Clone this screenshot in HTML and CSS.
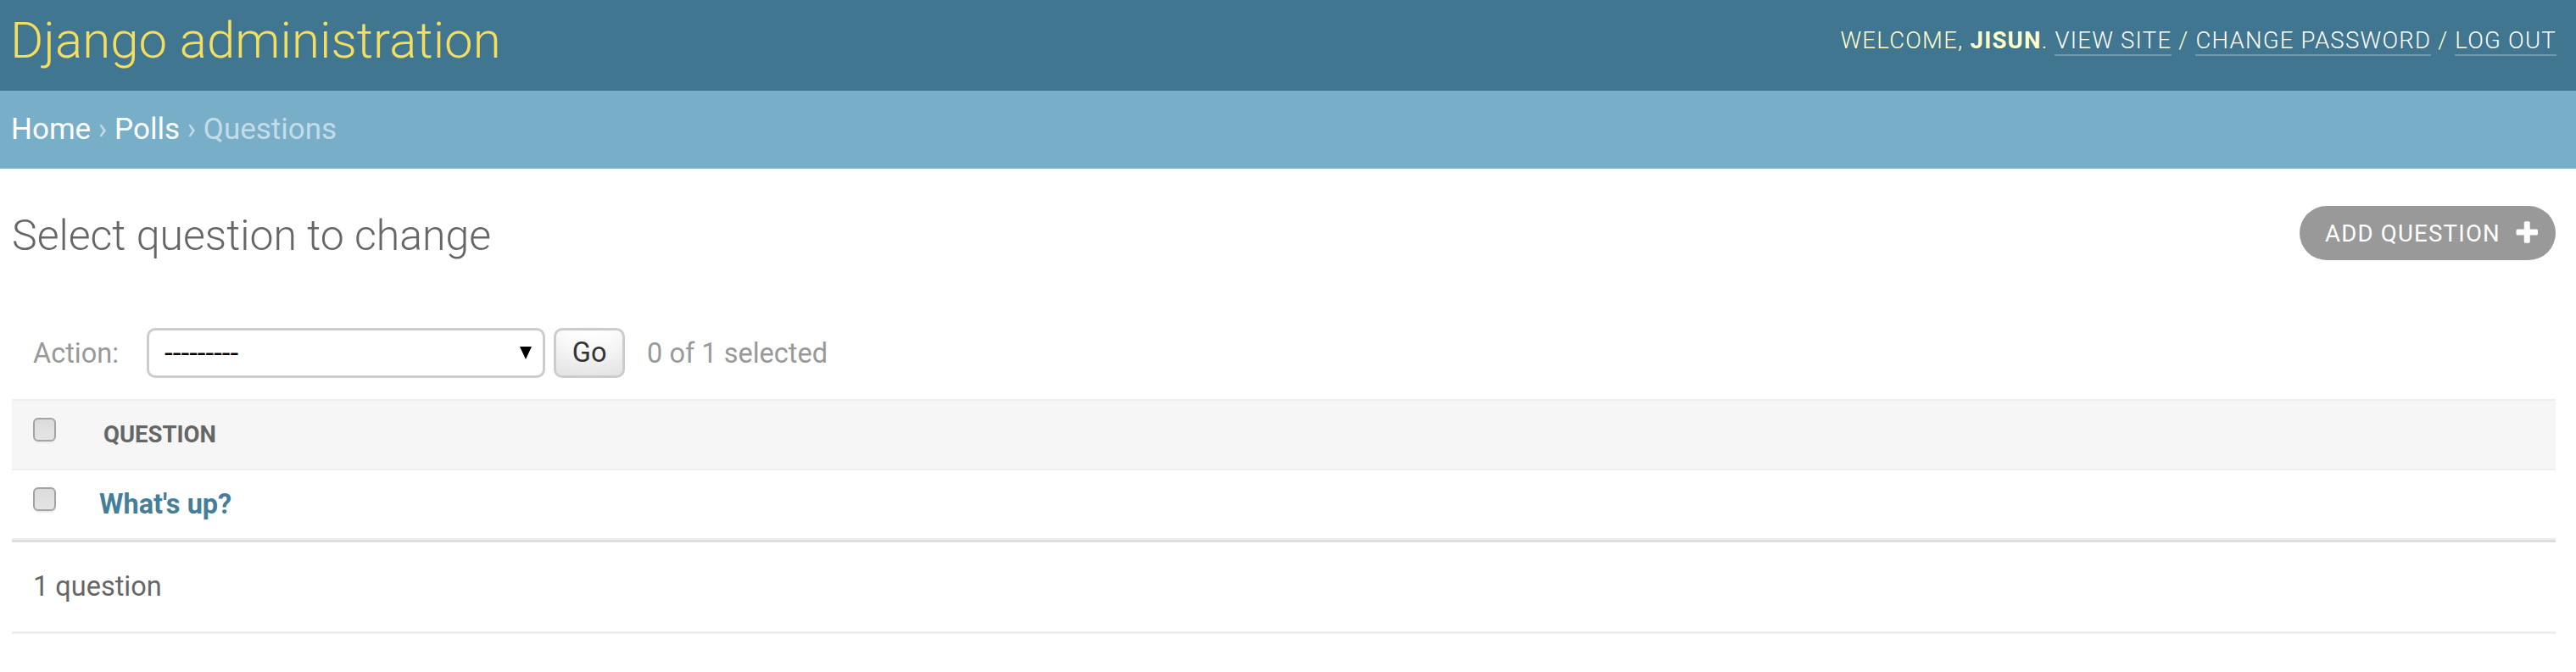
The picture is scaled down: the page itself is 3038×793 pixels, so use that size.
FILE: index.html
```html
<!DOCTYPE html>
<html lang="en">
<head>
<meta charset="utf-8">
<title>Select question to change | Django site admin</title>
<link rel="stylesheet" href="styles.css">
</head>
<body>
<div class="container">
  <header class="header">
    <h1 class="branding">Django administration</h1>
    <div class="user-tools">
      Welcome, <strong>jisun</strong>. <a href="#" class="tool-link">View site</a> / <a href="#" class="tool-link">Change password</a> / <a href="#" class="tool-link">Log out</a>
    </div>
  </header>
  <nav class="breadcrumbs">
    <a href="#">Home</a> &rsaquo; <a href="#">Polls</a> &rsaquo; Questions
  </nav>
  <main class="content">
    <div class="title-row">
      <h1 class="page-title">Select question to change</h1>
      <a href="#" class="addlink">Add question
        <svg class="add-icon" viewBox="0 0 1792 1792" aria-hidden="true"><path d="M1600 736v192q0 40-28 68t-68 28h-416v416q0 40-28 68t-68 28h-192q-40 0-68-28t-28-68v-416h-416q-40 0-68-28t-28-68v-192q0-40 28-68t68-28h416v-416q0-40 28-68t68-28h192q40 0 68 28t28 68v416h416q40 0 68 28t28 68z"/></svg>
      </a>
    </div>
    <div class="changelist">
      <div class="actions">
        <label class="action-label">Action:</label>
        <div class="select-wrap">
          <select class="action-select">
            <option>---------</option>
            <option>Delete selected questions</option>
          </select>
          <svg class="select-arrow" viewBox="0 0 14 15" aria-hidden="true"><polygon points="0,0 14,0 7,15"/></svg>
        </div>
        <button class="go-button" type="button">Go</button>
        <span class="action-counter">0 of 1 selected</span>
      </div>
      <table class="results">
        <thead>
          <tr>
            <th class="col-check"><input type="checkbox" class="cb"></th>
            <th class="col-question"><span class="th-text">Question</span></th>
          </tr>
        </thead>
        <tbody>
          <tr>
            <td class="col-check"><input type="checkbox" class="cb"></td>
            <th class="col-question row-title"><a href="#">What's up?</a></th>
          </tr>
        </tbody>
      </table>
      <p class="paginator">1 question</p>
    </div>
  </main>
</div>
</body>
</html>
```
FILE: styles.css
```css
html, body {
  margin: 0;
  padding: 0;
  background: #fff;
}

body {
  font-family: Roboto, "Lucida Grande", "DejaVu Sans", "Bitstream Vera Sans", Verdana, Arial, sans-serif;
  color: #333;
  font-size: 35px;
}

a {
  color: #447e9b;
  text-decoration: none;
}

/* Header */
.header {
  display: flex;
  justify-content: space-between;
  align-items: flex-start;
  height: 107px;
  box-sizing: border-box;
  padding: 12px 23px 0 12px;
  background: #417690;
  color: #ffc;
}

.branding {
  margin: 0;
  font-size: 60px;
  font-weight: 300;
  line-height: normal;
  color: #f5dd5d;
}

.user-tools {
  margin-top: 18.5px;
  font-size: 27.5px;
  font-weight: 300;
  letter-spacing: 1.25px;
  text-transform: uppercase;
  line-height: normal;
  white-space: nowrap;
}

.user-tools strong {
  font-weight: 700;
}

.tool-link {
  color: #fff;
  border-bottom: 2px solid rgba(255, 255, 255, 0.25);
}

/* Breadcrumbs */
.breadcrumbs {
  background: #79aec8;
  padding: 25px 13px 26px;
  font-size: 35px;
  line-height: normal;
  color: #c4dce8;
}

.breadcrumbs a {
  color: #fff;
}

/* Content */
.content {
  padding: 44px 24px 0 14px;
}

.title-row {
  display: flex;
  justify-content: space-between;
  align-items: flex-start;
  margin-bottom: 55px;
}

.page-title {
  margin: 6px 0 0 0;
  font-size: 50px;
  font-weight: 300;
  line-height: 58px;
  color: #666;
}

.addlink {
  display: flex;
  align-items: center;
  height: 64px;
  box-sizing: border-box;
  padding: 0 17.5px 0 30px;
  border-radius: 32px;
  background: #999;
  color: #fff;
  font-size: 27.5px;
  font-weight: 400;
  letter-spacing: 1.25px;
  text-transform: uppercase;
}

.add-icon {
  width: 32.5px;
  height: 32.5px;
  margin-left: 15px;
  fill: #fff;
}

/* Actions bar */
.actions {
  display: flex;
  align-items: center;
  padding: 25px;
  color: #999;
  font-size: 32.5px;
}

.action-label {
  margin-right: 33px;
}

.select-wrap {
  position: relative;
  display: flex;
}

.action-select {
  appearance: none;
  -webkit-appearance: none;
  width: 470px;
  height: 59px;
  box-sizing: border-box;
  margin: 0;
  padding: 0 40px 0 18px;
  border: 3px solid #ccc;
  border-radius: 10px;
  background: #fff;
  color: #000;
  font-family: Roboto, "DejaVu Sans", sans-serif;
  font-size: 35px;
}

.select-arrow {
  position: absolute;
  right: 16px;
  top: 22px;
  width: 14px;
  height: 15px;
  fill: #000;
  pointer-events: none;
}

.go-button {
  width: 84px;
  height: 59px;
  margin: 0 0 0 10px;
  padding: 0;
  border: 3px solid #ccc;
  border-radius: 10px;
  background: #fff;
  box-shadow: inset 0 -37px 50px -25px rgba(0, 0, 0, 0.15);
  color: #333;
  font-family: Roboto, "DejaVu Sans", sans-serif;
  font-size: 32.5px;
  line-height: 1;
}

.action-counter {
  margin-left: 26px;
}

/* Results table */
.results {
  width: 100%;
  border-collapse: collapse;
  border-top: 2px solid #eee;
}

.results thead th {
  background: #f6f6f6;
  border-bottom: 2px solid #eee;
  padding: 20px 0;
  text-align: left;
  vertical-align: top;
  line-height: 40px;
}

.results tbody td,
.results tbody th {
  padding: 20px 0;
  text-align: left;
  vertical-align: top;
  line-height: 40px;
  border-bottom: 2px solid #eee;
}

.col-check {
  width: 58px;
  padding-left: 25px !important;
}

.th-text {
  display: block;
  padding-left: 25px;
  font-size: 27.5px;
  font-weight: 700;
  color: #666;
  text-transform: uppercase;
}

.row-title {
  padding-left: 20px !important;
  font-size: 32.5px;
  font-weight: 700;
}

.cb {
  appearance: none;
  -webkit-appearance: none;
  display: block;
  width: 27px;
  height: 28px;
  margin: 0;
  box-sizing: border-box;
  border: 2px solid #a3a3a3;
  border-radius: 6px;
  background: linear-gradient(#dcdcdc, #e4e4e4);
  box-shadow: 0 2px 0 #ececec;
}

.paginator {
  margin: 0;
  padding: 25px;
  border-top: 3px solid #ddd;
  border-bottom: 3px solid #eee;
  font-size: 32.5px;
  line-height: 55px;
  color: #666;
}
```
